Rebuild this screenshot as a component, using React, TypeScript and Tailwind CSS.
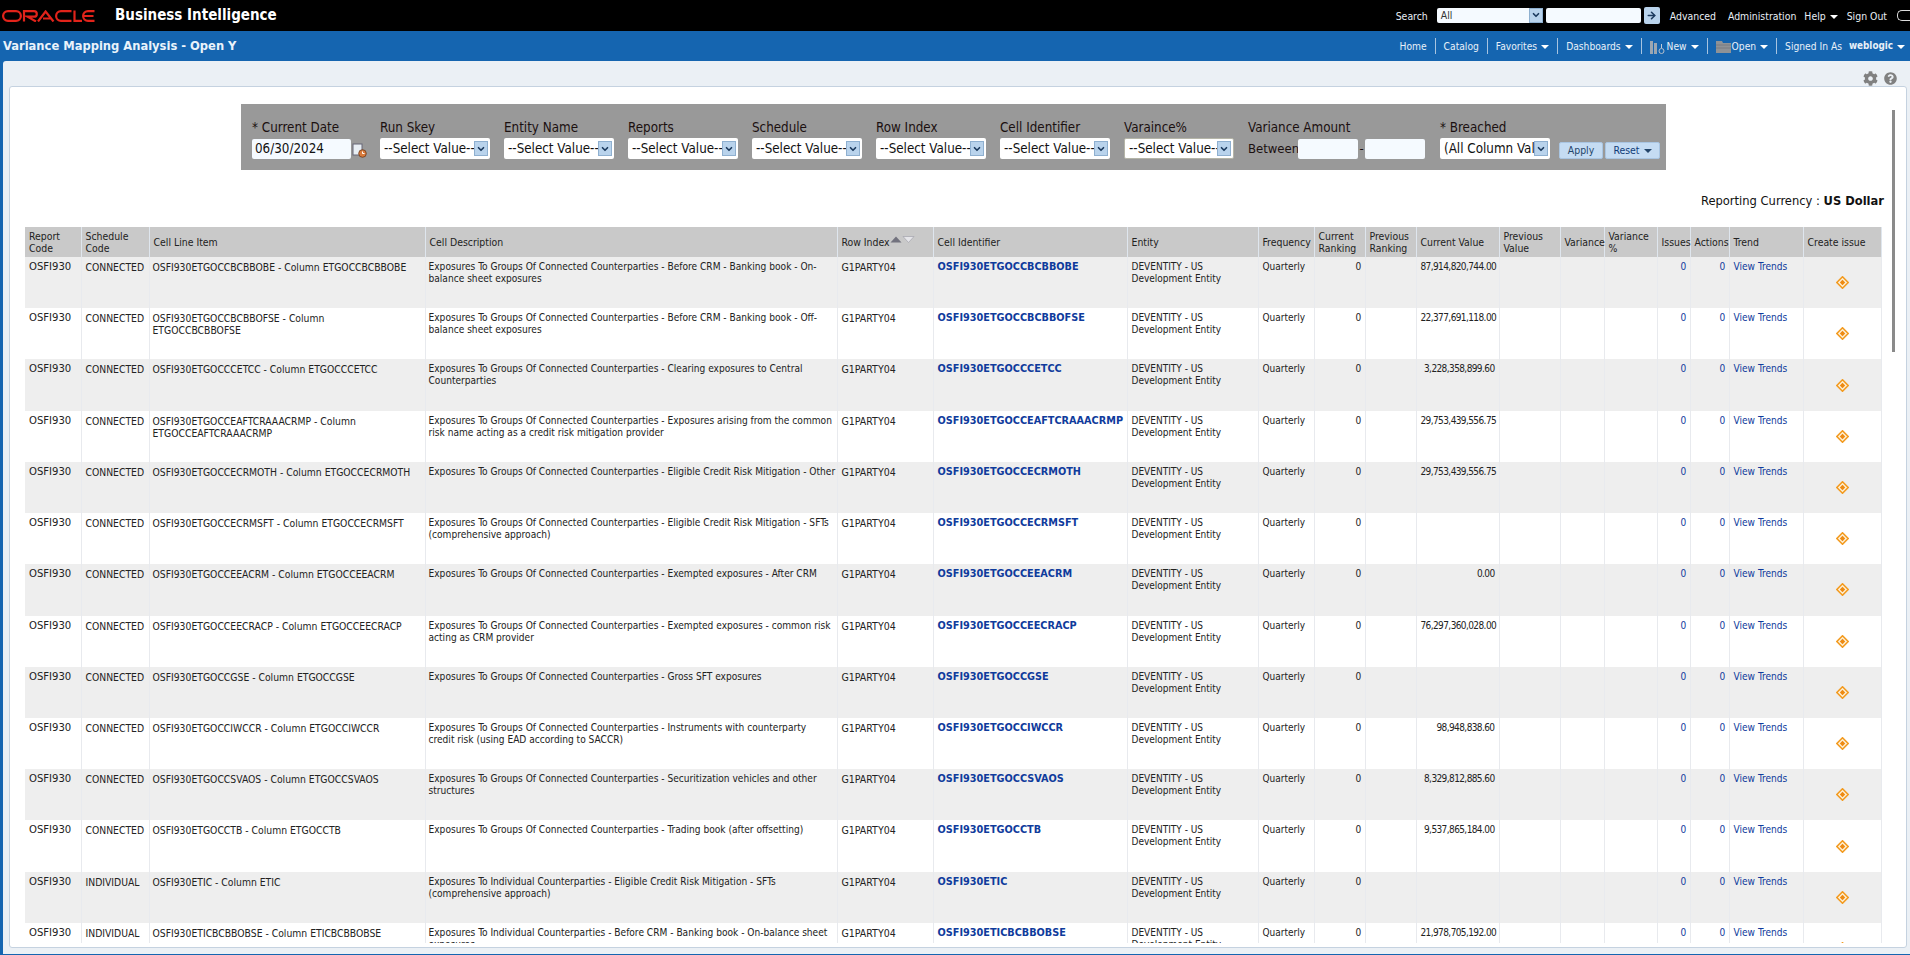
import React from 'react';
import { ChevronDown, ArrowRight } from 'lucide-react';
import { FaCog, FaQuestionCircle } from 'react-icons/fa';

const UI = "font-['DejaVu_Sans_Condensed','Liberation_Sans',sans-serif]";

type RowData = {
  schedule: string;
  item: string;
  desc: string;
  id: string;
  value: string;
};

const ROWS: RowData[] = [
  { schedule: 'CONNECTED', item: 'OSFI930ETGOCCBCBBOBE - Column ETGOCCBCBBOBE', desc: 'Exposures To Groups Of Connected Counterparties - Before CRM - Banking book - On-balance sheet exposures', id: 'OSFI930ETGOCCBCBBOBE', value: '87,914,820,744.00' },
  { schedule: 'CONNECTED', item: 'OSFI930ETGOCCBCBBOFSE - Column ETGOCCBCBBOFSE', desc: 'Exposures To Groups Of Connected Counterparties - Before CRM - Banking book - Off-balance sheet exposures', id: 'OSFI930ETGOCCBCBBOFSE', value: '22,377,691,118.00' },
  { schedule: 'CONNECTED', item: 'OSFI930ETGOCCCETCC - Column ETGOCCCETCC', desc: 'Exposures To Groups Of Connected Counterparties - Clearing exposures to Central Counterparties', id: 'OSFI930ETGOCCCETCC', value: '3,228,358,899.60' },
  { schedule: 'CONNECTED', item: 'OSFI930ETGOCCEAFTCRAAACRMP - Column ETGOCCEAFTCRAAACRMP', desc: 'Exposures To Groups Of Connected Counterparties - Exposures arising from the common risk name acting as a credit risk mitigation provider', id: 'OSFI930ETGOCCEAFTCRAAACRMP', value: '29,753,439,556.75' },
  { schedule: 'CONNECTED', item: 'OSFI930ETGOCCECRMOTH - Column ETGOCCECRMOTH', desc: 'Exposures To Groups Of Connected Counterparties - Eligible Credit Risk Mitigation - Other', id: 'OSFI930ETGOCCECRMOTH', value: '29,753,439,556.75' },
  { schedule: 'CONNECTED', item: 'OSFI930ETGOCCECRMSFT - Column ETGOCCECRMSFT', desc: 'Exposures To Groups Of Connected Counterparties - Eligible Credit Risk Mitigation - SFTs (comprehensive approach)', id: 'OSFI930ETGOCCECRMSFT', value: '' },
  { schedule: 'CONNECTED', item: 'OSFI930ETGOCCEEACRM - Column ETGOCCEEACRM', desc: 'Exposures To Groups Of Connected Counterparties - Exempted exposures - After CRM', id: 'OSFI930ETGOCCEEACRM', value: '0.00' },
  { schedule: 'CONNECTED', item: 'OSFI930ETGOCCEECRACP - Column ETGOCCEECRACP', desc: 'Exposures To Groups Of Connected Counterparties - Exempted exposures - common risk acting as CRM provider', id: 'OSFI930ETGOCCEECRACP', value: '76,297,360,028.00' },
  { schedule: 'CONNECTED', item: 'OSFI930ETGOCCGSE - Column ETGOCCGSE', desc: 'Exposures To Groups Of Connected Counterparties - Gross SFT exposures', id: 'OSFI930ETGOCCGSE', value: '' },
  { schedule: 'CONNECTED', item: 'OSFI930ETGOCCIWCCR - Column ETGOCCIWCCR', desc: 'Exposures To Groups Of Connected Counterparties - Instruments with counterparty credit\u00a0risk (using EAD according to SACCR)', id: 'OSFI930ETGOCCIWCCR', value: '98,948,838.60' },
  { schedule: 'CONNECTED', item: 'OSFI930ETGOCCSVAOS - Column ETGOCCSVAOS', desc: 'Exposures To Groups Of Connected Counterparties - Securitization vehicles and other structures', id: 'OSFI930ETGOCCSVAOS', value: '8,329,812,885.60' },
  { schedule: 'CONNECTED', item: 'OSFI930ETGOCCTB - Column ETGOCCTB', desc: 'Exposures To Groups Of Connected Counterparties - Trading book (after offsetting)', id: 'OSFI930ETGOCCTB', value: '9,537,865,184.00' },
  { schedule: 'INDIVIDUAL', item: 'OSFI930ETIC - Column ETIC', desc: 'Exposures To Individual Counterparties - Eligible Credit Risk Mitigation - SFTs (comprehensive approach)', id: 'OSFI930ETIC', value: '' },
  { schedule: 'INDIVIDUAL', item: 'OSFI930ETICBCBBOBSE - Column ETICBCBBOBSE', desc: 'Exposures To Individual Counterparties - Before CRM - Banking book - On-balance sheet exposures', id: 'OSFI930ETICBCBBOBSE', value: '21,978,705,192.00' },
];

const COLS: { label: React.ReactNode; w: string }[] = [
  { label: 'Report Code', w: 'w-[56px]' },
  { label: 'Schedule Code', w: 'w-[68px]' },
  { label: 'Cell Line Item', w: 'w-[276px]' },
  { label: 'Cell Description', w: 'w-[412px]' },
  { label: <SortLabel />, w: 'w-[96px]' },
  { label: 'Cell Identifier', w: 'w-[194px]' },
  { label: 'Entity', w: 'w-[131px]' },
  { label: 'Frequency', w: 'w-[56px]' },
  { label: 'Current Ranking', w: 'w-[51px]' },
  { label: 'Previous Ranking', w: 'w-[51px]' },
  { label: 'Current Value', w: 'w-[83px]' },
  { label: 'Previous Value', w: 'w-[61px]' },
  { label: 'Variance', w: 'w-[44px]' },
  { label: 'Variance %', w: 'w-[53px]' },
  { label: 'Issues', w: 'w-[33px]' },
  { label: 'Actions', w: 'w-[39px]' },
  { label: 'Trend', w: 'w-[74px]' },
  { label: 'Create issue', w: 'w-[78px]' },
];

function SortLabel() {
  return (
    <span className="flex items-center whitespace-nowrap">
      Row Index
      <svg width="25" height="9" viewBox="0 0 25 9" className="-mt-[6px] shrink-0">
        <path d="M0.5 7.5 L6 1.5 L11.5 7.5 Z" fill="#72727e" />
        <path d="M13 1.5 L24 1.5 L18.5 7.5 Z" fill="#e6e6ea" stroke="#a4a4ac" strokeWidth="0.7" />
      </svg>
    </span>
  );
}

function OracleLogo() {
  return (
    <svg width="97" height="12" viewBox="0 0 97 12" fill="none" stroke="#e2231a" strokeWidth="2.2">
      <rect x="2.1" y="1.1" width="17.8" height="9.8" rx="4.9" />
      <path d="M23 11.5 V1.1 H33 a2.6 2.6 0 0 1 0 5.6 H26.5 L35 11.5" />
      <path d="M37 11.5 L44.6 1.5 L52.5 11.5 M42 8.5 H50" />
      <path d="M70.5 1.1 H60 a4.9 4.9 0 0 0 0 9.8 H70.5" />
      <path d="M73.5 0.5 V10.9 H81" />
      <path d="M93.5 1.1 H87 a4.9 4.9 0 0 0 0 9.8 H93.5 M83 6 H92.5" />
    </svg>
  );
}

function Diamond() {
  return (
    <svg width="13" height="13" viewBox="0 0 13 13" className="mx-auto">
      <path d="M6.5 0.8 L12.2 6.5 L6.5 12.2 L0.8 6.5 Z" fill="#fdf0d5" stroke="#f39a1e" strokeWidth="1.6" strokeLinejoin="round" />
      <path d="M6.5 3.8 L9.2 6.5 L6.5 9.2 L3.8 6.5 Z" fill="#ee8a12" />
    </svg>
  );
}

function CaretDown({ color = 'border-t-white' }: { color?: string }) {
  return <span className={`ml-1 inline-block h-0 w-0 border-x-[4px] border-t-[4px] border-x-transparent align-middle ${color}`} />;
}

function SelectBox({ text, focus }: { text: string; focus?: boolean }) {
  return (
    <div className={`flex h-[21px] w-[110px] items-center overflow-hidden rounded-[2px] bg-white ${focus ? 'border border-[#b5b5a8]' : ''}`}>
      <span className="flex-1 overflow-hidden whitespace-nowrap pl-1 text-[13.3px] leading-none text-[#111]">{text}</span>
      <span className="mr-[2px] flex h-[15px] w-[14px] shrink-0 items-center justify-center border border-[#8fb0d0] bg-[#b9d3ec]">
        <ChevronDown size={10} strokeWidth={4} className="text-[#1c3a5e]" />
      </span>
    </div>
  );
}

function FilterField({ label, w = 'w-[110px]', children }: { label: string; w?: string; children: React.ReactNode }) {
  return (
    <div className={`flex ${w} flex-col`}>
      <div className="mb-[2px] h-[17px] whitespace-nowrap text-[13.3px] leading-[17px] text-[#1b1010]">{label}</div>
      {children}
    </div>
  );
}

function TopLink({ className, children }: { className?: string; children: React.ReactNode }) {
  return <span className={`whitespace-nowrap pt-[2px] text-[10.4px] text-[#e8eef5] ${className ?? ''}`}>{children}</span>;
}

function NavItem({ icon, children, last }: { icon?: React.ReactNode; children: React.ReactNode; last?: boolean }) {
  return (
    <div className={`flex h-[16px] items-center whitespace-nowrap pl-[8px] pt-[1px] text-[10.2px] text-[#e8f0f8] ${last ? 'pr-[4px]' : 'border-r border-[#a8c4e0] pr-[8px]'}`}>
      {icon}
      {children}
    </div>
  );
}

function Row({ row, index }: { row: RowData; index: number }) {
  const bg = index % 2 === 0 ? 'bg-[#eeeeee]' : 'bg-white';
  const td = 'border-r border-[#e8eaee] px-[4px] pt-[4px] align-top';
  const num = 'text-[10px] tracking-[-0.6px]';
  return (
    <tr className={`h-[51.23px] ${bg} text-[10.3px] leading-[12px] text-[#222]`}>
      <td className={`${td} text-[11.2px]`}>OSFI930</td>
      <td className={`${td} whitespace-nowrap`}>{row.schedule}</td>
      <td className="border-r border-[#e8eaee] pl-[3px] pr-[14px] pt-[4px] align-top">{row.item}</td>
      <td className="border-r border-[#e8eaee] pl-[3px] pr-0 pt-[4px] align-top text-[10.1px]">{row.desc}</td>
      <td className={`${td} text-[10.5px]`}>G1PARTY04</td>
      <td className={`${td} whitespace-nowrap text-[10.8px] font-bold text-[#0f3b9c]`}>{row.id}</td>
      <td className={`${td} text-[10px]`}>DEVENTITY - US Development Entity</td>
      <td className={`${td} text-[10px]`}>Quarterly</td>
      <td className={`${td} text-right ${num}`}>0</td>
      <td className={td}></td>
      <td className={`${td} text-right ${num}`}>{row.value}</td>
      <td className={td}></td>
      <td className={td}></td>
      <td className={td}></td>
      <td className={`${td} text-right text-[#0f3b9c] ${num}`}>0</td>
      <td className={`${td} text-right text-[#0f3b9c] ${num}`}>0</td>
      <td className={`${td} whitespace-nowrap text-[10.1px] text-[#0f3b9c]`}>View Trends</td>
      <td className="border-r border-[#e8eaee] px-[4px] align-middle"><Diamond /></td>
    </tr>
  );
}

export default function App() {
  return (
    <div className={`flex h-[955px] w-[1910px] flex-col overflow-hidden bg-[#1565b0] ${UI}`}>
      {/* black branding bar */}
      <div className="flex h-[31px] shrink-0 items-center bg-black pl-[1px]">
        <OracleLogo />
        <span className="ml-[17px] text-[15px] font-bold text-white">Business Intelligence</span>
        <div className="ml-auto flex items-center">
          <TopLink>Search</TopLink>
          <div className="ml-[9px] flex h-[15px] w-[106px] items-center rounded-[2px] bg-[#f5faff] pl-1 text-[10.4px] text-[#333]">
            <span className="flex-1">All</span>
            <span className="flex h-[15px] w-[14px] items-center justify-center border border-[#8fb0d0] bg-[#b9d3ec]">
              <ChevronDown size={10} strokeWidth={4} className="text-[#1c3a5e]" />
            </span>
          </div>
          <div className="ml-[3px] h-[15px] w-[95px] rounded-[2px] bg-[#f5faff]" />
          <div className="ml-[3px] flex h-[17px] w-[16px] items-center justify-center rounded-[2px] bg-[#b9d3ec]">
            <ArrowRight size={11} strokeWidth={3.5} className="text-[#1c3a5e]" />
          </div>
          <div className="ml-[10px] flex items-center">
            <TopLink>Advanced</TopLink>
            <TopLink className="ml-[12px]">Administration</TopLink>
            <TopLink className="ml-[8px]">Help<CaretDown /></TopLink>
            <TopLink className="ml-[9px]">Sign Out</TopLink>
          </div>
          <div className="ml-[10px] h-[11px] w-[13px] rounded-l-[5px] border-y border-l border-[#ddd]" />
        </div>
      </div>

      {/* blue header bar */}
      <div className="flex h-[30px] shrink-0 items-center bg-[#1565b0] pl-[3px]">
        <span className="text-[12.8px] font-bold text-[#eaf3fb]">Variance Mapping Analysis - Open Y</span>
        <div className="ml-auto flex items-center pr-[1px]">
          <NavItem>Home</NavItem>
          <NavItem>Catalog</NavItem>
          <NavItem>Favorites<CaretDown /></NavItem>
          <NavItem>Dashboards<CaretDown /></NavItem>
          <NavItem icon={
            <svg width="16" height="14" viewBox="0 0 16 14" className="mr-[1px] shrink-0">
              <rect x="0" y="1" width="3" height="13" fill="#9aa6b2" />
              <rect x="4" y="3" width="3" height="11" fill="#9aa6b2" />
              <rect x="11" y="4" width="1" height="4" fill="#c3ccd6" />
              <circle cx="11.5" cy="11" r="2.5" fill="none" stroke="#b4bfca" strokeWidth="1" />
            </svg>
          }>New<CaretDown /></NavItem>
          <NavItem icon={
            <svg width="15" height="12" viewBox="0 0 15 12" className="mr-[1px] shrink-0">
              <path d="M0 0 H6 L7 2 H15 V12 H0 Z" fill="#8f9296" />
              <path d="M0 4 H15 M0 7 H15" stroke="#74777b" strokeWidth="0.8" />
            </svg>
          }>Open<CaretDown /></NavItem>
          <NavItem last>
            Signed In As
            <span className="ml-[7px] text-[9.8px] font-bold">weblogic</span>
            <CaretDown />
          </NavItem>
        </div>
      </div>

      {/* page body */}
      <div className="mb-[1px] ml-[3px] flex flex-1 flex-col overflow-hidden rounded-tl-[3px] bg-[#ebf0f5] pb-[6px] pl-[6px] pr-[3px]">
        <div className="flex h-[25px] shrink-0 items-center justify-end gap-[6px] pr-[10px] pt-[10px]">
          <FaCog size={15} className="text-[#808080]" />
          <FaQuestionCircle size={13} className="text-[#808080]" />
        </div>
        <div className="relative flex flex-1 flex-col overflow-hidden rounded-[3px] border border-[#c5d2e0] bg-white pb-[4px]">
          {/* scrollbar thumb */}
          <div className="absolute right-[11px] top-[23px] h-[242px] w-[3px] bg-[#8a8a8a]" />

          <div className="flex-1 overflow-hidden">
            <div className="flex h-[83px] flex-col pl-[231px]">
              {/* prompts */}
              <div className="mt-[17px] flex h-[66px] w-[1425px] items-start bg-[#999999] pl-[11px] pt-[15px]">
                <FilterField label="* Current Date" w="w-[128px]">
                  <div className="mt-[1px] flex items-center">
                    <div className="flex h-[20px] w-[99px] items-center rounded-[2px] bg-[#f5faff] pl-[3px] text-[13.3px] text-[#111]">06/30/2024</div>
                    <svg width="15" height="15" viewBox="0 0 15 15" className="ml-[1px] mt-[2px]">
                      <rect x="1" y="1" width="9" height="11" fill="#e8eef4" stroke="#667" strokeWidth="1" />
                      <circle cx="10.5" cy="10.5" r="3.8" fill="#d97a3a" stroke="#6b3a1c" strokeWidth="0.8" />
                      <path d="M10.5 8.5 V10.5 H12.5" stroke="#fff" strokeWidth="1" fill="none" />
                    </svg>
                  </div>
                </FilterField>
                <div className="flex gap-[14px]">
                  <FilterField label="Run Skey"><SelectBox text="--Select Value--" /></FilterField>
                  <FilterField label="Entity Name"><SelectBox text="--Select Value--" /></FilterField>
                  <FilterField label="Reports"><SelectBox text="--Select Value--" /></FilterField>
                  <FilterField label="Schedule"><SelectBox text="--Select Value--" /></FilterField>
                  <FilterField label="Row Index"><SelectBox text="--Select Value--" /></FilterField>
                  <FilterField label="Cell Identifier"><SelectBox text="--Select Value--" /></FilterField>
                  <FilterField label="Varaince%"><SelectBox text="--Select Value--" focus /></FilterField>
                  <FilterField label="Variance Amount" w="w-[178px]">
                    <div className="flex h-[21px] items-center text-[13px] text-[#1b1010]">
                      <span className="w-[50px] whitespace-nowrap">Between</span>
                      <div className="h-[20px] w-[60px] rounded-[2px] bg-[#f5faff]" />
                      <span className="w-[7px] text-center">-</span>
                      <div className="h-[20px] w-[60px] rounded-[2px] bg-[#f5faff]" />
                    </div>
                  </FilterField>
                  <FilterField label="* Breached"><SelectBox text="(All Column Val" /></FilterField>
                </div>
                <div className="ml-[9px] mt-[23px] flex gap-[2px]">
                  <div className="flex h-[17px] w-[44px] items-center justify-center rounded-[2px] border border-[#a9c5e2] bg-[#c5dcf3] text-[10.4px] text-[#24456a]">Apply</div>
                  <div className="flex h-[17px] w-[55px] items-center justify-center rounded-[2px] border border-[#a9c5e2] bg-[#c5dcf3] text-[10.4px] text-[#0f3b78]">
                    Reset<CaretDown color="border-t-[#24456a]" />
                  </div>
                </div>
              </div>
            </div>

            <div className="h-[57px] pr-[22px] pt-[23px] text-right text-[12.8px] leading-[16px] text-[#111]">
              Reporting Currency : <span className="font-bold">US Dollar</span>
            </div>

            {/* results table */}
            <table className="ml-[15px] w-[1856px] table-fixed border-collapse">
              <colgroup>
                {COLS.map((c, i) => <col key={i} className={c.w} />)}
              </colgroup>
              <thead>
                <tr className="h-[30px] bg-[#c9c9c9] text-left text-[10.4px] leading-[12px] text-[#222]">
                  {COLS.map((c, i) => (
                    <th key={i} className="border-r border-[#dfe6ee] px-[4px] font-normal">{c.label}</th>
                  ))}
                </tr>
              </thead>
              <tbody>
                {ROWS.map((r, i) => <Row key={r.id} row={r} index={i} />)}
              </tbody>
            </table>
          </div>
        </div>
      </div>
    </div>
  );
}
